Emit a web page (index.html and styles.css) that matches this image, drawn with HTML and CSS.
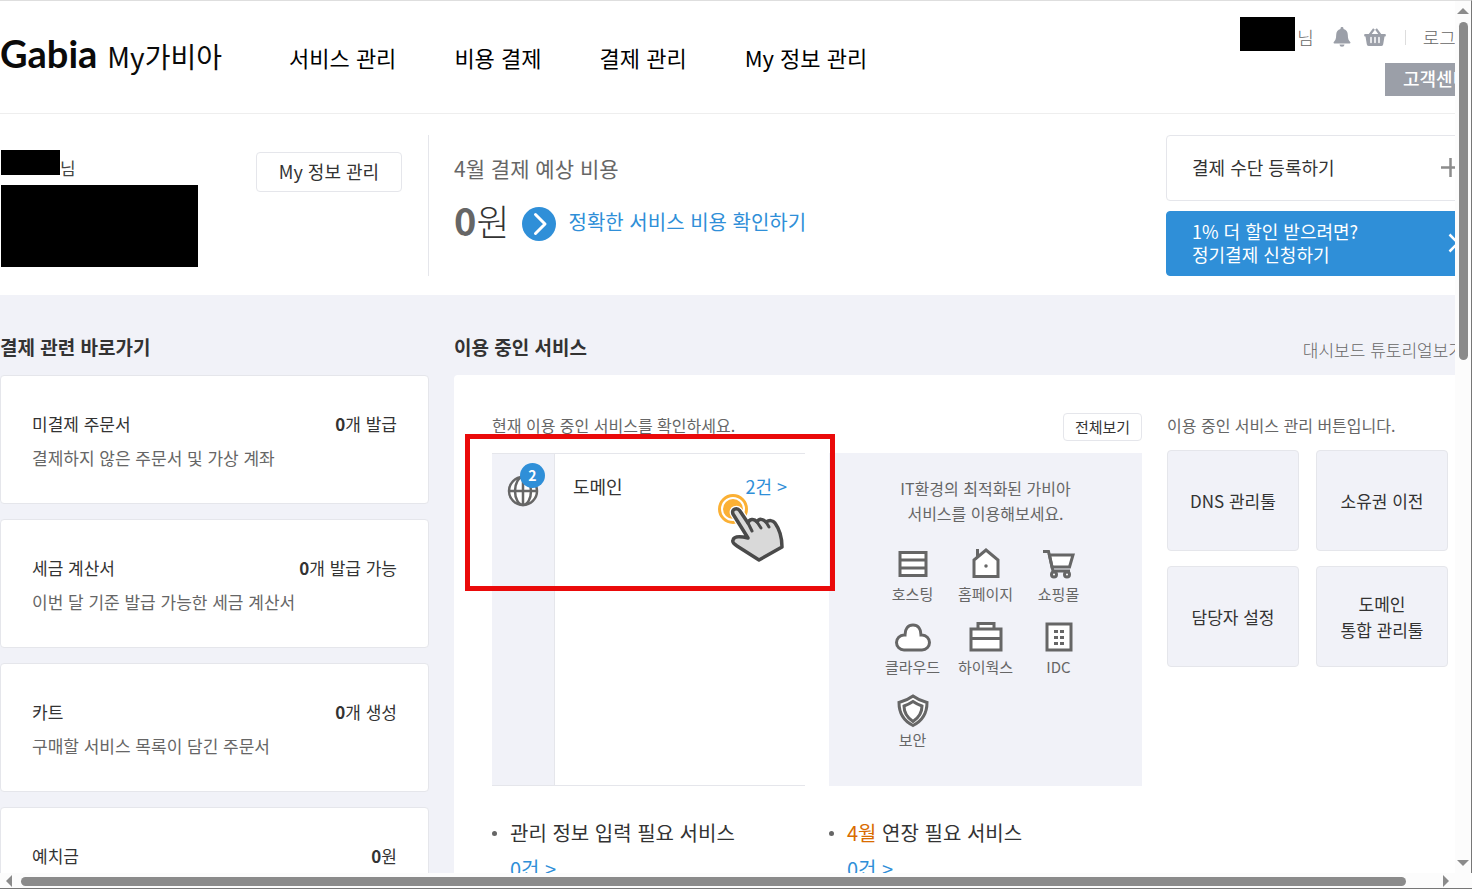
FILE: index.html
```html
<!DOCTYPE html>
<html lang="ko">
<head>
    <meta charset="UTF-8">
    <meta name="viewport" content="width=device-width, initial-scale=1.0">
    <title>My가비아</title>
    <link rel="stylesheet" href="styles.css">
</head>
<body>
    <div class="viewport">
        <div class="page">
            <header class="header">
                <a href="#" class="logo"><strong>Gabia</strong><span>My가비아</span></a>
                <nav class="nav">
                    <a href="#">서비스 관리</a>
                    <a href="#">비용 결제</a>
                    <a href="#">결제 관리</a>
                    <a href="#">My 정보 관리</a>
                </nav>
                <div class="util">
                    <div class="util-row">
                        <span class="mask mask-small"></span>
                        <span class="util-name">님</span>
                        <a href="#" class="util-icon" aria-label="알림">
                            <svg width="18" height="20" viewBox="0 0 18 20"><path d="M9 0c.9 0 1.500.6 1.500 1.400v.7c2.700.7 4.300 2.900 4.300 5.700 0 4.200 1 5.900 2.400 7.200.5.500.3 1.500-.6 1.500H1.400c-.9 0-1.100-1-.6-1.500 1.400-1.300 2.400-3 2.400-7.200C3.200 5 4.800 2.800 7.500 2.100v-.7C7.500.6 8.100 0 9 0zM6.500 17.500h5a2.500 2.300 0 0 1-5 0z" fill="#9b9fa8"/></svg>
                        </a>
                        <a href="#" class="util-icon" aria-label="장바구니">
                            <svg width="22" height="18" viewBox="0 0 22 18"><path d="M5.500 7 10 1M16.500 7 12 1" stroke="#9b9fa8" stroke-width="2.200" fill="none"/><path d="M1 6h20a.8.8 0 0 1 .8.800v.900a.8.800 0 0 1-.8.800h-.5l-1.300 7.800A1.800 1.800 0 0 1 17.400 18H4.600a1.800 1.800 0 0 1-1.800-1.700L1.500 8.500H1a.8.800 0 0 1-.8-.8v-.9A.8.800 0 0 1 1 6z" fill="#9b9fa8"/><path d="M7 9.500v5M11 9.500v5M15 9.500v5" stroke="#fff" stroke-width="1.500" stroke-linecap="round"/></svg>
                        </a>
                        <span class="util-line"></span>
                        <a href="#" class="util-logout">로그아웃</a>
                    </div>
                    <button class="support-btn">고객센터</button>
                </div>
            </header>

            <section class="summary">
                <div class="profile">
                    <div>
                        <p class="profile-name"><span class="mask mask-name"></span>님</p>
                        <div class="mask mask-info"></div>
                    </div>
                    <button class="outline-btn profile-btn">My 정보 관리</button>
                </div>
                <div class="cost">
                    <h2>4월 결제 예상 비용</h2>
                    <div class="cost-row">
                        <p class="cost-total"><strong>0</strong>원</p>
                        <a href="#" class="cost-link">
                            <svg width="34" height="34" viewBox="0 0 34 34"><circle cx="17" cy="17" r="17" fill="#2f8fd8"/><path d="M13.500 7.500 23 17l-9.500 9.500" fill="none" stroke="#fff" stroke-width="3" stroke-linecap="round" stroke-linejoin="round"/></svg>
                            <span>정확한 서비스 비용 확인하기</span>
                        </a>
                    </div>
                </div>
                <div class="pay-links">
                    <a href="#" class="pay-link">결제 수단 등록하기
                        <svg width="19" height="19" viewBox="0 0 19 19"><path d="M9.500 0v19M0 9.500h19" stroke="#8c8c8c" stroke-width="2.500"/></svg>
                    </a>
                    <a href="#" class="pay-link pay-link-blue"><span>1% 더 할인 받으려면?<br>정기결제 신청하기</span>
                        <svg width="12" height="20" viewBox="0 0 12 20"><path d="M1.500 1.500 10 10l-8.500 8.500" fill="none" stroke="#fff" stroke-width="2.500"/></svg>
                    </a>
                </div>
            </section>

            <main class="dashboard">
                <aside class="shortcuts">
                    <div class="section-head"><h2>결제 관련 바로가기</h2></div>
                    <div class="card">
                        <div class="card-row"><h3>미결제 주문서</h3><span><strong>0</strong>개 발급</span></div>
                        <p>결제하지 않은 주문서 및 가상 계좌</p>
                    </div>
                    <div class="card">
                        <div class="card-row"><h3>세금 계산서</h3><span><strong>0</strong>개 발급 가능</span></div>
                        <p>이번 달 기준 발급 가능한 세금 계산서</p>
                    </div>
                    <div class="card">
                        <div class="card-row"><h3>카트</h3><span><strong>0</strong>개 생성</span></div>
                        <p>구매할 서비스 목록이 담긴 주문서</p>
                    </div>
                    <div class="card">
                        <div class="card-row"><h3>예치금</h3><span><strong>0</strong>원</span></div>
                    </div>
                </aside>

                <section class="services">
                    <div class="section-head">
                        <h2>이용 중인 서비스</h2>
                        <a href="#">대시보드 튜토리얼보기</a>
                    </div>
                    <div class="panel">
                        <div class="using">
                            <div class="using-head">
                                <p>현재 이용 중인 서비스를 확인하세요.</p>
                                <button class="outline-btn all-btn">전체보기</button>
                            </div>
                            <div class="using-grid">
                                <div class="service-list">
                                    <div class="service-icons">
                                        <div class="service-icon">
                                            <svg width="32" height="32" viewBox="0 0 32 32" fill="none" stroke="#666" stroke-width="2.500"><circle cx="16" cy="16" r="14" fill="#fff"/><ellipse cx="16" cy="16" rx="8" ry="14"/><path d="M16 2v28M2 16h28"/></svg>
                                            <span class="badge">2</span>
                                        </div>
                                    </div>
                                    <div class="service-row">
                                        <span>도메인</span>
                                        <a href="#">2건 &gt;</a>
                                    </div>
                                    <div class="highlight"></div>
                                    <svg class="pointer" width="70" height="72" viewBox="0 0 70 72">
                                        <circle cx="17" cy="17" r="13.500" fill="#fff" stroke="#fbb034" stroke-width="3"/>
                                        <circle cx="17" cy="17" r="10" fill="#fbb034"/>
                                        <path d="M17 22c-2-5 4-7 7-3l8 12c1-4 6-5 9-1 2-4 6-3 9 0 3-2 7-2 9 1 5 7 7 14 7 24L43 68 21 54c-3-2-5-4-4-6 1-4 7-4 15-2z" fill="#fff" stroke="#fff" stroke-width="6"/>
                                        <path d="M17 22c-2-5 4-7 7-3l8 12c1-4 6-5 9-1 2-4 6-3 9 0 3-2 7-2 9 1 5 7 7 14 7 24L43 68 21 54c-3-2-5-4-4-6 1-4 7-4 15-2z" fill="#d9d9d9" stroke="#4a4a4a" stroke-width="3.500" stroke-linejoin="round"/>
                                        <path d="m32 31 4 8M41 30l4 6M50 30l3 5" fill="none" stroke="#4a4a4a" stroke-width="3" stroke-linecap="round"/>
                                    </svg>
                                </div>
                                <div class="promo">
                                    <p>IT환경의 최적화된 가비아<br>서비스를 이용해보세요.</p>
                                    <div class="promo-grid">
                                        <a href="#">
                                            <svg viewBox="0 0 36 36"><path d="M5 6.500h26v23H5zM5 14h26M5 22h26"/></svg>
                                            호스팅
                                        </a>
                                        <a href="#">
                                            <svg viewBox="0 0 36 36"><path d="M6 30.500V14L18 4l12 10v16.500z"/><path d="M9.500 12V3"/><circle cx="18" cy="20" r="1" fill="#666" stroke-width="1.500"/></svg>
                                            홈페이지
                                        </a>
                                        <a href="#">
                                            <svg viewBox="0 0 36 36"><path d="M8.500 9H32l-3.500 12H11z"/><path d="M2 5.500h5.500L12 25h17" fill="none"/><circle cx="13" cy="28.500" r="2.500"/><circle cx="26" cy="28.500" r="2.500"/></svg>
                                            쇼핑몰
                                        </a>
                                        <a href="#">
                                            <svg viewBox="0 0 36 36"><path d="M9 31a7.500 7.500 0 0 1 0-15h1C10 10 13 6 18 6s8 4 8 10h1a7.500 7.500 0 0 1 0 15z"/></svg>
                                            클라우드
                                        </a>
                                        <a href="#">
                                            <svg viewBox="0 0 36 36"><path d="M10 10V4.500h16V10M3 10h30v21H3zM3 19.500h30"/></svg>
                                            하이웍스
                                        </a>
                                        <a href="#">
                                            <svg viewBox="0 0 36 36"><path d="M6 5h24v26H6z"/><path d="M13 12.500h4m2 0h4m-10 6h4m2 0h4m-10 6h4m2 0h4"/></svg>
                                            IDC
                                        </a>
                                        <a href="#">
                                            <svg viewBox="0 0 36 36"><path d="M18 4c4 3 8 5 14 6.500 0 11-4 18-14 23-10-5-14-12-14-23C10 9 14 7 18 4z"/><path d="M18 9.500c3 2 6 3.500 9 4.500 0 7-3 11.500-9 15.500-6-4-9-8.500-9-15.500 3-1 6-2.500 9-4.500z"/></svg>
                                            보안
                                        </a>
                                    </div>
                                </div>
                            </div>
                            <ul class="todo">
                                <li><h3>관리 정보 입력 필요 서비스</h3><a href="#">0건 &gt;</a></li>
                                <li><h3><em>4월</em> 연장 필요 서비스</h3><a href="#">0건 &gt;</a></li>
                            </ul>
                        </div>
                        <div class="tools">
                            <p>이용 중인 서비스 관리 버튼입니다.</p>
                            <div class="tools-grid">
                                <button>DNS 관리툴</button>
                                <button>소유권 이전</button>
                                <button>담당자 설정</button>
                                <button>도메인<br>통합 관리툴</button>
                            </div>
                        </div>
                    </div>
                </section>
            </main>
        </div>
    </div>

    <div class="scroll scroll-y" aria-hidden="true">
        <span class="arrow arrow-up"></span>
        <div class="track"><div class="thumb"></div></div>
        <span class="arrow arrow-down"></span>
    </div>
    <div class="scroll scroll-x" aria-hidden="true">
        <span class="arrow arrow-left"></span>
        <div class="track"><div class="thumb"></div></div>
        <span class="arrow arrow-right"></span>
    </div>
</body>
</html>
```
FILE: styles.css
```css
* {
    box-sizing: border-box;
}
body {
    margin: 0;
    height: 100vh;
    display: grid;
    grid-template-columns: minmax(0, 1fr) 17px;
    grid-template-rows: minmax(0, 1fr) 16px;
    overflow: hidden;
    font-family: "Noto Sans CJK KR", "Noto Sans", sans-serif;
    font-size: 17px;
    color: #333;
    background-color: #fcfcfc;
}
h2, h3, p, ul {
    margin: 0;
    padding: 0;
    font-weight: 400;
}
strong {
    font-weight: 700;
}
a {
    color: inherit;
    text-decoration: none;
}
button {
    padding: 0;
    font-family: inherit;
    color: #333;
    cursor: pointer;
}
svg {
    display: block;
    flex-shrink: 0;
}
.viewport {
    overflow: hidden;
    border-top: 1px solid #dedede;
    background-color: #f1f2f8;
}
.page {
    min-width: 1494px;
}
.mask {
    display: block;
    background-color: #000;
}

/* header */
.header {
    display: flex;
    height: 113px;
    background-color: #fff;
    border-bottom: 1px solid #eee;
}
.logo {
    display: flex;
    align-items: baseline;
    gap: 10px;
    width: 289px;
    padding-top: 28px;
    line-height: 48px;
    color: #0a0a0a;
}
.logo strong {
    font-family: Lato, sans-serif;
    font-size: 38px;
}
.logo span {
    font-size: 28px;
}
.nav {
    display: flex;
    gap: 58px;
    padding-top: 39px;
    font-size: 22px;
    line-height: 34px;
    color: #000;
}
.util {
    display: flex;
    flex-direction: column;
    align-items: flex-end;
    gap: 6px;
    margin-left: auto;
    padding-top: 16px;
}
.util-row {
    display: flex;
    align-items: center;
    height: 40px;
    padding-right: 5px;
    font-size: 18px;
    font-weight: 300;
    line-height: 34px;
    color: #666;
}
.mask-small {
    align-self: flex-start;
    width: 55px;
    height: 34px;
}
.util-name {
    margin: 0 19px 0 2px;
}
.util-icon {
    margin-right: 13px;
}
.util-line {
    width: 1px;
    height: 15px;
    margin: 0 17px 0 6px;
    background-color: #ddd;
}
.support-btn {
    width: 109px;
    height: 33px;
    padding: 0 0 3px 18px;
    border: none;
    background-color: #9b9fa8;
    color: #fff;
    font-size: 18px;
    font-weight: 500;
    text-align: left;
}

/* summary */
.summary {
    display: flex;
    height: 181px;
    padding: 21px 0 19px;
    background-color: #fff;
}
.profile {
    display: flex;
    justify-content: space-between;
    width: 429px;
    padding: 15px 26px 0 1px;
    border-right: 1px solid #e5e6eb;
}
.profile-name {
    display: flex;
    font-size: 17px;
    line-height: 35px;
    color: #444;
}
.mask-name {
    width: 59px;
    height: 25px;
}
.mask-info {
    width: 197px;
    height: 82px;
}
.outline-btn {
    padding-bottom: 2px;
    border: 1px solid #e5e6eb;
    border-radius: 4px;
    background-color: #fff;
}
.profile-btn {
    width: 146px;
    height: 40px;
    margin-top: 2px;
    font-size: 18px;
}
.cost {
    flex: 1;
    padding: 18px 0 0 25px;
}
.cost h2 {
    font-size: 21px;
    line-height: 30px;
    color: #666;
}
.cost-row {
    display: flex;
    align-items: flex-end;
    gap: 12px;
    margin-top: 11px;
}
.cost-total {
    font-size: 36px;
    font-weight: 300;
    line-height: 52px;
}
.cost-total strong {
    font-size: 38px;
    color: #666;
}
.cost-link {
    display: flex;
    gap: 13px;
    padding-bottom: 5px;
    font-size: 20px;
    line-height: 30px;
    color: #2f8fd8;
}
.pay-links {
    display: flex;
    flex-direction: column;
    gap: 10px;
    width: 328px;
}
.pay-link {
    display: flex;
    flex: 1;
    justify-content: space-between;
    align-items: center;
    padding: 0 33px 0 25px;
    border: 1px solid #e5e6eb;
    border-radius: 4px;
    font-size: 18px;
    line-height: 23px;
}
.pay-link-blue {
    border-color: #2f8fd8;
    background-color: #2f8fd8;
    color: #fff;
}

/* dashboard */
.dashboard {
    display: flex;
    gap: 25px;
    padding-top: 37px;
}
.section-head {
    display: flex;
    justify-content: space-between;
    align-items: flex-end;
    margin-bottom: 13px;
    padding-right: 30px;
}
.section-head h2 {
    font-size: 19px;
    font-weight: 700;
    line-height: 30px;
}
.section-head a {
    font-weight: 300;
    line-height: 24px;
    color: #666;
}
.shortcuts {
    width: 429px;
}
.card {
    min-height: 129px;
    margin-bottom: 15px;
    padding: 31px 31px 0;
    border: 1px solid #e5e6eb;
    border-radius: 4px;
    background-color: #fff;
    line-height: 34px;
}
.card-row {
    display: flex;
    justify-content: space-between;
}
.card h3 {
    font-size: 17px;
}
.card p {
    color: #666;
}
.services {
    flex: 1;
}
.panel {
    display: flex;
    gap: 25px;
    padding: 38px 38px 60px;
    border-radius: 4px;
    background-color: #fff;
}
.using {
    width: 650px;
}
.using-head {
    display: flex;
    justify-content: space-between;
    margin-bottom: 12px;
    font-size: 16px;
    line-height: 24px;
    color: #666;
}
.all-btn {
    width: 79px;
    height: 28px;
    font-size: 15px;
}
.using-grid {
    display: grid;
    grid-template-columns: 1fr 1fr;
    gap: 24px;
    min-height: 333px;
}
.service-list {
    position: relative;
    display: flex;
    border-top: 1px solid #e5e6eb;
    border-bottom: 1px solid #e5e6eb;
}
.service-icons {
    width: 63px;
    padding: 21px 15px;
    border-right: 1px solid #e5e6eb;
    background-color: #f1f2f8;
}
.service-icon {
    position: relative;
}
.badge {
    position: absolute;
    top: -12px;
    left: 13px;
    width: 25px;
    height: 25px;
    border-radius: 50%;
    background-color: #2f8fd8;
    color: #fff;
    font-size: 14px;
    font-weight: 700;
    line-height: 25px;
    text-align: center;
}
.service-row {
    display: flex;
    flex: 1;
    justify-content: space-between;
    padding: 20px 18px;
    font-size: 18px;
    line-height: 24px;
}
.service-row a, .todo a {
    color: #2f8fd8;
}
.highlight {
    position: absolute;
    top: -20px;
    left: -27px;
    width: 370px;
    height: 157px;
    border: 5px solid #ea0a0a;
}
.pointer {
    position: absolute;
    top: 38px;
    left: 224px;
}
.promo {
    padding: 23px 0;
    background-color: #f1f2f8;
    font-size: 16px;
    line-height: 25px;
    text-align: center;
    color: #666;
}
.promo-grid {
    display: grid;
    grid-template-columns: repeat(3, 73px);
    justify-content: center;
    row-gap: 13px;
    margin-top: 20px;
    font-size: 15px;
    line-height: 24px;
}
.promo-grid svg {
    width: 36px;
    height: 36px;
    margin: 0 auto;
    fill: #fff;
    stroke: #666;
    stroke-width: 3px;
}
.todo {
    display: grid;
    grid-template-columns: 1fr 1fr;
    gap: 24px;
    margin-top: 32px;
    list-style: none;
    font-size: 20px;
}
.todo li {
    display: grid;
    grid-template-columns: 5px 1fr;
    column-gap: 13px;
    align-items: center;
    line-height: 30px;
}
.todo li::before {
    content: "";
    width: 5px;
    height: 5px;
    border-radius: 50%;
    background-color: #666;
}
.todo h3 {
    font-size: 20px;
}
.todo em {
    font-style: normal;
    color: #d96c00;
}
.todo a {
    grid-column: 2;
    margin-top: 6px;
}
.tools {
    flex: 1;
    font-size: 16px;
    line-height: 24px;
    color: #666;
}
.tools-grid {
    display: grid;
    grid-template-columns: 132px 132px;
    gap: 15px 17px;
    margin-top: 13px;
}
.tools-grid button {
    height: 101px;
    border: 1px solid #e5e6eb;
    border-radius: 4px;
    background-color: #f1f2f8;
    font-size: 17px;
    line-height: 26px;
}

/* scrollbars */
.scroll {
    display: flex;
    align-items: center;
    background-color: #fcfcfc;
}
.scroll-y {
    flex-direction: column;
    padding: 7px 0;
    border-top: 1px solid #dedede;
    border-right: 1px solid #777;
}
.scroll-x {
    grid-column: 1 / 3;
    padding: 1px 23px 0 6px;
    border-bottom: 1px solid #777;
}
.track {
    flex: 1;
}
.thumb {
    border-radius: 5px;
    background-color: #8b8b8b;
}
.scroll-y .track {
    margin: 8px 0;
}
.scroll-y .thumb {
    width: 9px;
    height: 338px;
}
.scroll-x .track {
    margin: 0 9px;
}
.scroll-x .thumb {
    width: 98%;
    height: 9px;
}
.arrow {
    border: 6px solid transparent;
}
.arrow-up {
    border-top: 0;
    border-bottom-color: #8b8b8b;
}
.arrow-down {
    border-bottom: 0;
    border-top-color: #8b8b8b;
}
.arrow-left {
    border-left: 0;
    border-right-color: #8b8b8b;
}
.arrow-right {
    border-right: 0;
    border-left-color: #8b8b8b;
}
```
